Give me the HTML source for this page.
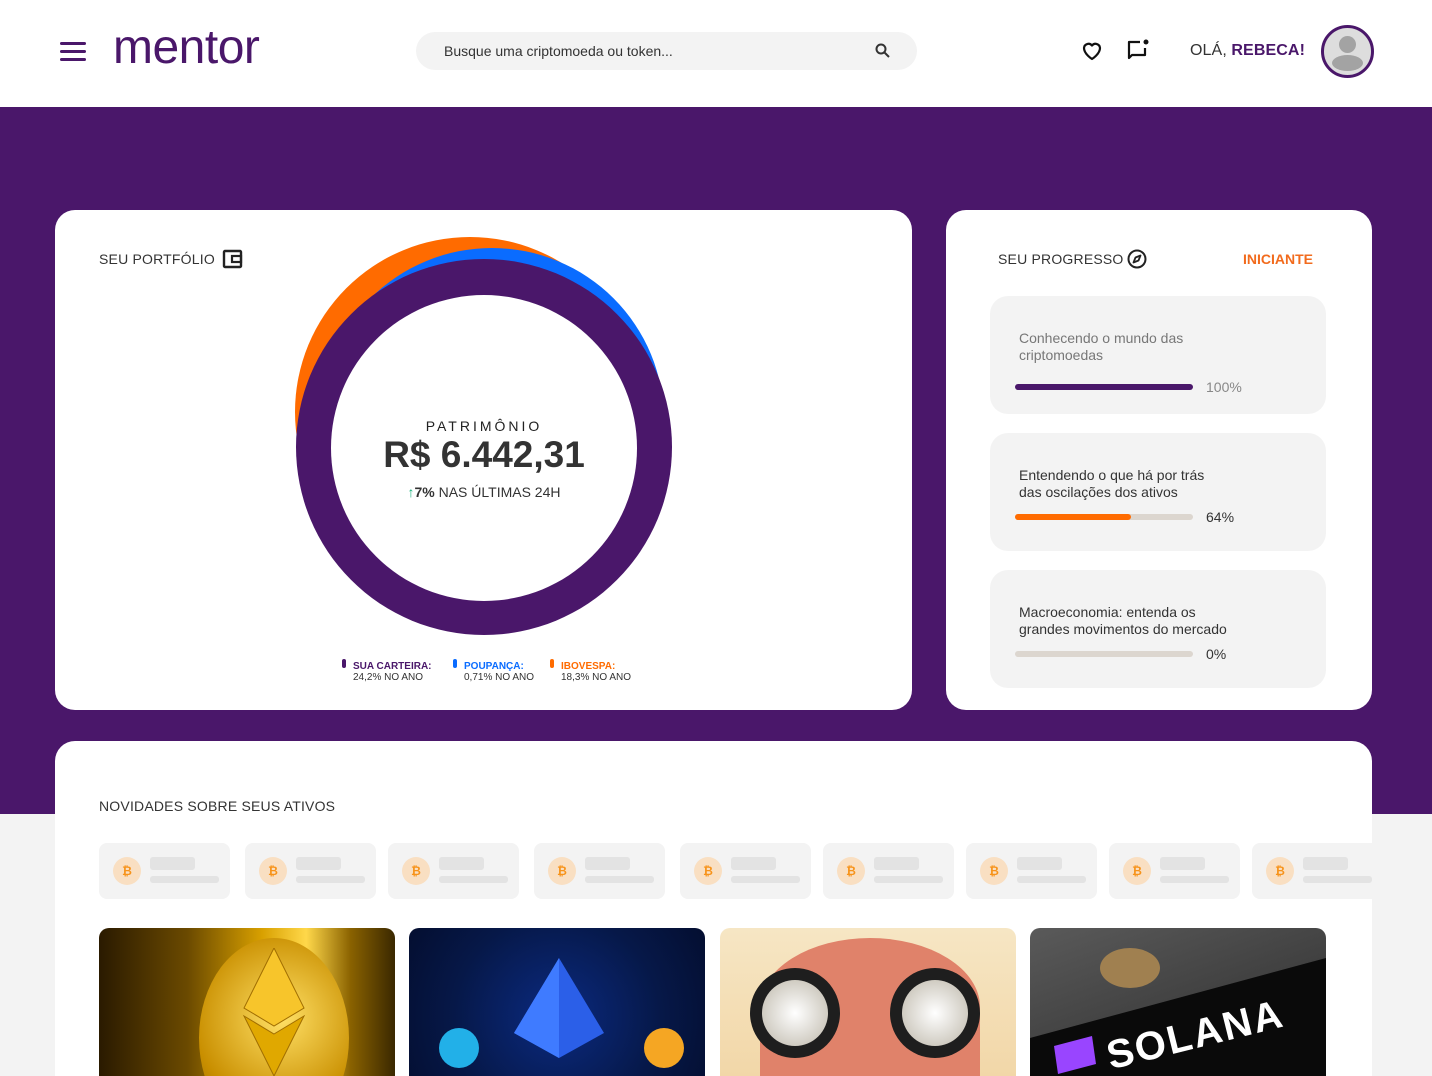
<!DOCTYPE html>
<html><head><meta charset="utf-8">
<style>
*{margin:0;padding:0;box-sizing:border-box}
html{width:1432px;height:1076px;overflow:hidden}
body{width:1432px;height:1076px;overflow:hidden;background:#f3f3f3;font-family:"Liberation Sans",sans-serif;position:relative;color:#333}
.abs{position:absolute}
.hdr{left:0;top:0;width:1432px;height:107px;background:#fff}
.purple{left:0;top:107px;width:1432px;height:707px;background:#4a176a}
.card{background:#fff;border-radius:20px}
.lbl{font-size:14px;color:#333;letter-spacing:.2px}
.pc{left:990px;width:336px;height:118px;background:#f3f3f3;border-radius:18px}
.pc .t{position:absolute;left:29px;top:34px;font-size:14px;line-height:17px;color:#333}
.pc .bar{position:absolute;left:25px;width:178px;height:6px;border-radius:3px;background:#dcd6cf}
.pc .pct{position:absolute;left:216px;font-size:14px;color:#333}
.chip{top:843px;width:131px;height:56px;background:#f3f3f3;border-radius:8px}
.chip .c{position:absolute;left:14px;top:14px;width:28px;height:28px;border-radius:50%;background:#f9dfc2;color:#f7931a;font-size:12px;font-weight:bold;text-align:center;line-height:28px}
.chip .a{position:absolute;left:51px;top:14px;width:45px;height:13px;background:#e3e3e3;border-radius:3px}
.chip .b{position:absolute;left:51px;top:33px;width:69px;height:7px;background:#e3e3e3;border-radius:3px}
.img{top:928px;width:296px;height:148px;border-radius:10px 10px 0 0;overflow:hidden}
</style></head><body>
<div class="abs hdr"></div>
<div class="abs" style="left:60px;top:42px;width:26px;height:3px;background:#4a176a;border-radius:2px"></div>
<div class="abs" style="left:60px;top:50px;width:26px;height:3px;background:#4a176a;border-radius:2px"></div>
<div class="abs" style="left:60px;top:58px;width:26px;height:3px;background:#4a176a;border-radius:2px"></div>
<div class="abs" style="left:113px;top:20px;font-size:48px;color:#4a176a;letter-spacing:-0.5px">mentor</div>
<div class="abs" style="left:416px;top:32px;width:501px;height:38px;background:#f3f3f3;border-radius:19px"></div>
<div class="abs" style="left:444px;top:43px;font-size:14px;color:#333">Busque uma criptomoeda ou token...</div>
<svg class="abs" style="left:874px;top:42px" width="18" height="18" viewBox="0 0 18 18"><circle cx="7" cy="7" r="4.5" fill="none" stroke="#333" stroke-width="2"/><path d="M10.5 10.5L15 15" stroke="#333" stroke-width="2"/></svg>
<svg class="abs" style="left:1080px;top:39px" width="24" height="24" viewBox="0 0 24 24"><path d="M12 20s-8-5-8-11a4.5 4.5 0 0 1 8-2.5A4.5 4.5 0 0 1 20 9c0 6-8 11-8 11z" fill="none" stroke="#111" stroke-width="2.2" stroke-linejoin="round"/></svg>
<svg class="abs" style="left:1126px;top:38px" width="24" height="24" viewBox="0 0 24 24"><path d="M14 4H3v16l3-3h13v-7" fill="none" stroke="#111" stroke-width="2.2" stroke-linejoin="round"/><circle cx="20" cy="4" r="2.5" fill="#111"/></svg>
<div class="abs" style="left:1190px;top:42px;font-size:16px;color:#333;letter-spacing:.1px">OLÁ, <b style="color:#4a176a">REBECA!</b></div>
<div class="abs" style="left:1321px;top:25px;width:53px;height:53px;border-radius:50%;border:3px solid #4a176a;background:#ddd;overflow:hidden">
<div class="abs" style="left:15px;top:8px;width:17px;height:17px;border-radius:50%;background:#a3a3a3"></div>
<div class="abs" style="left:8px;top:27px;width:31px;height:16px;border-radius:50%;background:#a3a3a3"></div>
</div>

<div class="abs purple"></div>

<div class="abs card" style="left:55px;top:210px;width:857px;height:500px"></div>
<div class="abs lbl" style="left:99px;top:251px">SEU PORTFÓLIO</div>
<svg class="abs" style="left:222px;top:249px" width="21" height="20" viewBox="0 0 21 20"><rect x="2" y="2" width="17" height="16" rx="1" fill="none" stroke="#222" stroke-width="2.4"/><rect x="10" y="7" width="9" height="6" fill="none" stroke="#222" stroke-width="2.2"/></svg>
<svg class="abs" style="left:0;top:0" width="912" height="700">
<circle cx="470" cy="412" r="175" fill="#ff6b00"/>
<circle cx="492" cy="420" r="172" fill="#0a6cff"/>
<circle cx="484" cy="447" r="188" fill="#4a176a"/>
<circle cx="484" cy="448" r="153" fill="#fff"/>
</svg>
<div class="abs" style="left:334px;top:418px;width:300px;text-align:center;font-size:14px;letter-spacing:3px;color:#222">PATRIMÔNIO</div>
<div class="abs" style="left:334px;top:434px;width:300px;text-align:center;font-size:37px;font-weight:bold;color:#333">R$ 6.442,31</div>
<div class="abs" style="left:334px;top:484px;width:300px;text-align:center;font-size:14px;color:#333"><span style="color:#1db37f">↑</span><b>7%</b> NAS ÚLTIMAS 24H</div>
<div class="abs" style="left:342px;top:659px;width:4px;height:9px;border-radius:2px;background:#4a176a"></div>
<div class="abs" style="left:353px;top:661px;font-size:10px;line-height:11px;color:#333"><b style="color:#4a176a">SUA CARTEIRA:</b><br>24,2% NO ANO</div>
<div class="abs" style="left:453px;top:659px;width:4px;height:9px;border-radius:2px;background:#0a6cff"></div>
<div class="abs" style="left:464px;top:661px;font-size:10px;line-height:11px;color:#333"><b style="color:#0a6cff">POUPANÇA:</b><br>0,71% NO ANO</div>
<div class="abs" style="left:550px;top:659px;width:4px;height:9px;border-radius:2px;background:#ff6b00"></div>
<div class="abs" style="left:561px;top:661px;font-size:10px;line-height:11px;color:#333"><b style="color:#ff6b00">IBOVESPA:</b><br>18,3% NO ANO</div>

<div class="abs card" style="left:946px;top:210px;width:426px;height:500px"></div>
<div class="abs lbl" style="left:998px;top:251px">SEU PROGRESSO</div>
<svg class="abs" style="left:1126px;top:248px" width="22" height="22" viewBox="0 0 22 22"><circle cx="11" cy="11" r="8.5" fill="none" stroke="#222" stroke-width="2"/><path d="M14.5 7.5L12.5 12.5 7.5 14.5 9.5 9.5z" fill="none" stroke="#222" stroke-width="1.8" stroke-linejoin="round"/></svg>
<div class="abs" style="left:1243px;top:251px;font-size:14px;color:#f26b1d;font-weight:bold">INICIANTE</div>
<div class="abs pc" style="top:296px"><div class="t" style="color:#777">Conhecendo o mundo das<br>criptomoedas</div><div class="bar" style="top:88px;background:#4a176a"></div><div class="pct" style="top:83px;color:#888">100%</div></div>
<div class="abs pc" style="top:433px"><div class="t">Entendendo o que há por trás<br>das oscilações dos ativos</div><div class="bar" style="top:81px"><div style="width:116px;height:6px;border-radius:3px;background:#ff6b00"></div></div><div class="pct" style="top:76px">64%</div></div>
<div class="abs pc" style="top:570px"><div class="t">Macroeconomia: entenda os<br>grandes movimentos do mercado</div><div class="bar" style="top:81px"></div><div class="pct" style="top:76px">0%</div></div>

<div class="abs card" style="left:55px;top:741px;width:1317px;height:335px;border-radius:20px 20px 0 0"></div>
<div class="abs lbl" style="left:99px;top:798px">NOVIDADES SOBRE SEUS ATIVOS</div>
<div class="abs chip" style="left:99px"><div class="c">₿</div><div class="a"></div><div class="b"></div></div>
<div class="abs chip" style="left:245px"><div class="c">₿</div><div class="a"></div><div class="b"></div></div>
<div class="abs chip" style="left:388px"><div class="c">₿</div><div class="a"></div><div class="b"></div></div>
<div class="abs chip" style="left:534px"><div class="c">₿</div><div class="a"></div><div class="b"></div></div>
<div class="abs chip" style="left:680px"><div class="c">₿</div><div class="a"></div><div class="b"></div></div>
<div class="abs chip" style="left:823px"><div class="c">₿</div><div class="a"></div><div class="b"></div></div>
<div class="abs chip" style="left:966px"><div class="c">₿</div><div class="a"></div><div class="b"></div></div>
<div class="abs chip" style="left:1109px"><div class="c">₿</div><div class="a"></div><div class="b"></div></div>
<div class="abs chip" style="left:1252px;width:120px;border-radius:8px 0 0 8px"><div class="c">₿</div><div class="a"></div><div class="b"></div></div>

<div class="abs img" style="left:99px;background:linear-gradient(90deg,#2a1a00,#6b4a00 30%,#d8a000 55%,#ffd84a 70%,#8a6200 85%,#3a2800)">
<div class="abs" style="left:100px;top:10px;width:150px;height:200px;border-radius:50%;background:radial-gradient(circle at 55% 40%,#ffe066,#c98f00 60%,#7a5200)"></div>
<svg class="abs" style="left:140px;top:20px" width="70" height="128" viewBox="0 0 70 128"><path d="M35 0L65 60 35 78 5 60z" fill="#f7c52b" stroke="#a06d00"/><path d="M35 86L65 68 35 128 5 68z" fill="#e0a800" stroke="#a06d00"/></svg>
</div>
<div class="abs img" style="left:409px;background:radial-gradient(circle at 50% 60%,#0b2a80,#061848 60%,#040e30)">
<svg class="abs" style="left:100px;top:30px" width="100" height="110" viewBox="0 0 100 110"><path d="M50 0L95 75 50 100 5 75z" fill="#2b5fe8"/><path d="M50 0L50 100 5 75z" fill="#3f7bff"/></svg>
<div class="abs" style="left:30px;top:100px;width:40px;height:40px;border-radius:50%;background:#22b0e8"></div>
<div class="abs" style="left:235px;top:100px;width:40px;height:40px;border-radius:50%;background:#f5a623"></div>
</div>
<div class="abs img" style="left:720px;background:linear-gradient(#f6e6c4,#f2d7a8)">
<div class="abs" style="left:40px;top:10px;width:220px;height:138px;border-radius:50% 50% 0 0;background:#e0826a"></div>
<div class="abs" style="left:30px;top:40px;width:90px;height:90px;border-radius:50%;background:#1e1e1e"></div>
<div class="abs" style="left:170px;top:40px;width:90px;height:90px;border-radius:50%;background:#1e1e1e"></div>
<div class="abs" style="left:42px;top:52px;width:66px;height:66px;border-radius:50%;background:radial-gradient(#fff,#bcb6a8)"></div>
<div class="abs" style="left:182px;top:52px;width:66px;height:66px;border-radius:50%;background:radial-gradient(#fff,#bcb6a8)"></div>
</div>
<div class="abs img" style="left:1030px;background:linear-gradient(160deg,#5a5a5a,#2a2a2a)">
<svg class="abs" style="left:0;top:0" width="296" height="148"><polygon points="0,110 296,30 296,148 0,148" fill="#0a0a0a"/><polygon points="24,118 62,108 66,136 28,146" fill="#9945ff"/></svg>
<div class="abs" style="left:75px;top:85px;font-size:40px;font-weight:bold;color:#fff;transform:rotate(-14deg);letter-spacing:2px">SOLANA</div>
<div class="abs" style="left:70px;top:20px;width:60px;height:40px;border-radius:50%;background:#a08050"></div>
</div>
</body></html>
